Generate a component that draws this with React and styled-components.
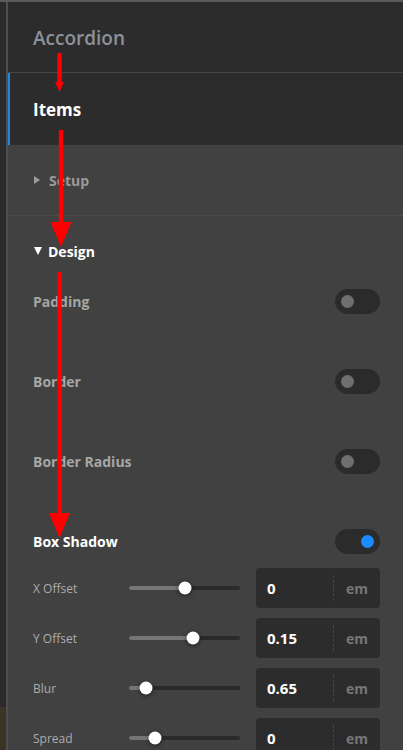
import React from 'react';
import styled, { createGlobalStyle } from 'styled-components';

const GlobalStyle = createGlobalStyle`
  html, body {
    margin: 0;
    padding: 0;
    background: #2b2b2b;
  }
  body {
    font-family: "Open Sans", "Noto Sans", "Liberation Sans", sans-serif;
    -webkit-font-smoothing: antialiased;
  }
`

const Frame = styled.div`
  position: relative;
  display: flex;
  width: 403px;
  height: 750px;
  overflow: hidden;
  border-top: 2px solid #5a5a5a;
  box-sizing: border-box;
`

// thin strip of the editor behind the panel
const SideStrip = styled.div`
  width: 6px;
  flex: none;
  background: linear-gradient(to bottom, #2a2a2a 0, #2a2a2a 705px, #3b3323 705px);
`

const Panel = styled.div`
  flex: 1;
  border-left: 2px solid #4e4e4e;
  background: #414141;
`

const Header = styled.div`
  height: 71px;
  display: flex;
  align-items: center;
  padding: 2px 0 0 25px;
  box-sizing: border-box;
  background: #2c2c2c;
  border-bottom: 1px solid #464646;
  color: #8d9299;
  font-size: 19px;
  font-weight: 600;
`

const Tab = styled.div`
  height: 72px;
  display: flex;
  align-items: center;
  padding-left: 23px;
  background: #2c2c2c;
  border-left: 2px solid #1e88e5;
  color: #ffffff;
  font-size: 17px;
  font-weight: 700;
`

const SectionHead = styled.div`
  height: 70px;
  display: flex;
  align-items: center;
  gap: 6px;
  padding-left: 25px;
  color: ${p => (p.open ? '#ffffff' : '#9a9a9a')};
  font-size: 14px;
  font-weight: 700;
  border-bottom: ${p => (p.divider ? '1px dotted #555555' : 'none')};
`

const Caret = styled.span`
  width: 0;
  height: 0;
  margin-left: 1px;
  ${p =>
    p.open
      ? `border-left: 4.5px solid transparent;
         border-right: 4.5px solid transparent;
         border-top: 8px solid #ffffff;`
      : `border-top: 4.5px solid transparent;
         border-bottom: 4.5px solid transparent;
         border-left: 6px solid #9a9a9a;
         margin-right: 3px;`}
`

const ToggleList = styled.div`
  display: flex;
  flex-direction: column;
  gap: 50px;
`

const ToggleRow = styled.div`
  height: 30px;
  display: flex;
  align-items: center;
  justify-content: space-between;
  padding: 0 23px 0 25px;
  color: ${p => (p.on ? '#ffffff' : '#a6a6a6')};
  font-size: 14px;
  font-weight: 700;
`

const Switch = styled.div`
  width: 45px;
  height: 25px;
  border-radius: 13px;
  background: #2b2b2b;
  display: flex;
  align-items: center;
  justify-content: ${p => (p.on ? 'flex-end' : 'flex-start')};
  padding: 0 6px;
  box-sizing: border-box;
`

const Knob = styled.span`
  width: 13px;
  height: 13px;
  border-radius: 50%;
  background: ${p => (p.on ? '#1a8cff' : '#6f6f6f')};
`

const SliderList = styled.div`
  display: flex;
  flex-direction: column;
  gap: 10px;
  margin-top: 12px;
`

const SliderRow = styled.div`
  height: 40px;
  display: flex;
  align-items: center;
  padding-left: 25px;
`

const SliderLabel = styled.span`
  width: 96px;
  color: #acacac;
  font-size: 12px;
`

const Track = styled.div`
  position: relative;
  width: 111px;
  height: 4px;
  border-radius: 2px;
  background: #2a2a2a;
`

const Fill = styled.div`
  height: 100%;
  border-radius: 2px;
  background: #767676;
`

const Thumb = styled.span`
  position: absolute;
  top: 50%;
  width: 13px;
  height: 13px;
  border-radius: 50%;
  background: #ffffff;
  transform: translate(-50%, -50%);
  box-shadow: 0 1px 4px rgba(0, 0, 0, 0.6);
`

const NumberBox = styled.div`
  width: 124px;
  height: 40px;
  margin-left: 16px;
  display: flex;
  align-items: center;
  border-radius: 4px;
  background: #2c2c2c;
`

const Value = styled.span`
  flex: 1;
  padding-left: 11px;
  color: #ffffff;
  font-size: 15px;
  font-weight: 700;
`

const Unit = styled.span`
  width: 46px;
  height: 26px;
  display: flex;
  align-items: center;
  justify-content: center;
  border-left: 1px dashed #454545;
  color: #777777;
  font-size: 14px;
  font-weight: 700;
`

const Overlay = styled.svg`
  position: absolute;
  left: 0;
  top: -2px;
  pointer-events: none;
`

const toggles = [
  { label: 'Padding', on: false },
  { label: 'Border', on: false },
  { label: 'Border Radius', on: false },
  { label: 'Box Shadow', on: true },
];

const sliders = [
  { label: 'X Offset', pct: 50, value: '0' },
  { label: 'Y Offset', pct: 57.7, value: '0.15' },
  { label: 'Blur', pct: 15.3, value: '0.65' },
  { label: 'Spread', pct: 23, value: '0' },
];

const Arrow = ({ x, y1, y2, head, w }) => (
  <g fill="#ff0000">
    <rect x={x - 2.2} y={y1} width="4.4" height={y2 - y1 - head + 1} />
    <polygon points={`${x - w / 2},${y2 - head} ${x + w / 2},${y2 - head} ${x},${y2}`} />
  </g>
);

export default function App() {
  return (
    <>
      <GlobalStyle />
      <Frame>
        <SideStrip />
        <Panel>
          <Header>Accordion</Header>
          <Tab>Items</Tab>
          <SectionHead divider>
            <Caret />
            Setup
          </SectionHead>
          <SectionHead open>
            <Caret open />
            Design
          </SectionHead>
          <ToggleList>
            {toggles.map(t => (
              <ToggleRow key={t.label} on={t.on}>
                {t.label}
                <Switch on={t.on}>
                  <Knob on={t.on} />
                </Switch>
              </ToggleRow>
            ))}
          </ToggleList>
          <SliderList>
            {sliders.map(s => (
              <SliderRow key={s.label}>
                <SliderLabel>{s.label}</SliderLabel>
                <Track>
                  <Fill style={{ width: `${s.pct}%` }} />
                  <Thumb style={{ left: `${s.pct}%` }} />
                </Track>
                <NumberBox>
                  <Value>{s.value}</Value>
                  <Unit>em</Unit>
                </NumberBox>
              </SliderRow>
            ))}
          </SliderList>
        </Panel>
        <Overlay width="403" height="750" viewBox="0 0 403 750">
          <Arrow x={59.5} y1={53} y2={92} head={10} w={9} />
          <Arrow x={61} y1={130} y2={247} head={25} w={21} />
          <Arrow x={59.5} y1={272} y2={538} head={25} w={21} />
        </Overlay>
      </Frame>
    </>
  );
}
